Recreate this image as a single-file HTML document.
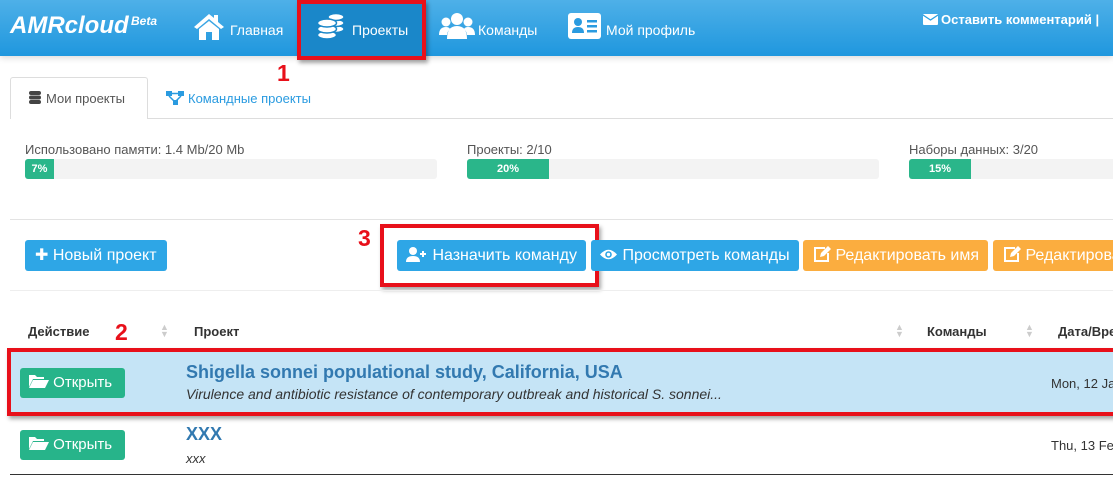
<!DOCTYPE html>
<html><head><meta charset="utf-8"><style>
*{box-sizing:border-box;margin:0;padding:0}
body{width:1113px;height:492px;overflow:hidden;background:#fff;font-family:"Liberation Sans",sans-serif;position:relative;color:#333}
.a{position:absolute;white-space:nowrap}
.hdr{left:0;top:0;width:1113px;height:56px;background:linear-gradient(#4eb0e8,#1f97de);box-shadow:0 2px 6px rgba(0,0,0,.15)}
.nav{color:#fff;font-size:14px}
.lbl{font-size:13px;color:#555}
.bar{height:20px;width:412px;background:#f3f3f3;border-radius:3px;overflow:hidden}
.fill{height:20px;background:#2ab68a;color:#fff;font-size:11px;text-align:center;line-height:20px;font-weight:bold}
.btn{height:31px;border-radius:3px;color:#fff;font-size:16px;line-height:31px;padding:0 10px}
.blue{background:#2ea6e6}.org{background:#fbad3f}.grn{background:#27b48a}
.red{border:4px solid #e8101a;box-shadow:2px 3px 4px rgba(0,0,0,.35)}
.num{color:#e8101a;font-size:23px;font-weight:bold}
.th{font-size:13px;font-weight:bold;color:#333}
.sort{color:#ccc;font-size:9px;line-height:7px}
</style></head><body>
<div class="a hdr"></div>
<div class="a" style="left:297px;top:0;width:128px;height:56px;background:#1a87c9"></div>
<div class="a" style="left:10px;top:12px;color:#fff;font-size:24px;font-weight:bold;font-style:italic">AMRcloud</div>
<div class="a" style="left:131px;top:14px;color:#fff;font-size:12px;font-weight:bold;font-style:italic">Beta</div>
<svg class="a" style="left:193px;top:12px" width="32" height="28" viewBox="0 0 32 28"><path d="M16 2 L1 15 L4 17 L16 7 L28 17 L31 15 L25 10 V3 H21 V6 Z" fill="#fff"/><path d="M6 17 L16 9 L26 17 V28 H19 V20 H13 V28 H6 Z" fill="#fff"/></svg>
<div class="a nav" style="left:230px;top:22px">Главная</div>
<svg class="a" style="left:316px;top:11px" width="30" height="30" viewBox="0 0 30 30"><g fill="#fff" stroke="#1a87c9" stroke-width="1.5"><ellipse cx="20" cy="18" rx="8" ry="3.5"/><ellipse cx="20" cy="12" rx="8" ry="3.5"/><ellipse cx="20" cy="6" rx="8" ry="3.5"/><ellipse cx="11" cy="24" rx="9.5" ry="4"/><ellipse cx="11" cy="18" rx="9.5" ry="4"/><ellipse cx="11" cy="12" rx="9.5" ry="4"/></g></svg>
<div class="a nav" style="left:352px;top:22px">Проекты</div>
<svg class="a" style="left:438px;top:13px" width="38" height="26" viewBox="0 0 38 26"><g fill="#fff"><circle cx="19" cy="6" r="6"/><circle cx="8" cy="9" r="4.5"/><circle cx="30" cy="9" r="4.5"/><path d="M9 26 Q9 13 19 13 Q29 13 29 26Z"/><path d="M1 22 Q1 14 8 14 Q11 14 12 16 Q9 19 9 22Z"/><path d="M37 22 Q37 14 30 14 Q27 14 26 16 Q29 19 29 22Z"/></g></svg>
<div class="a nav" style="left:478px;top:22px">Команды</div>
<svg class="a" style="left:568px;top:13px" width="33" height="26" viewBox="0 0 33 26"><rect x="0" y="0" width="33" height="26" rx="3" fill="#fff"/><circle cx="10" cy="9" r="4" fill="#2a9be0"/><path d="M4 20 Q4 14 10 14 Q16 14 16 20Z" fill="#2a9be0"/><rect x="19" y="7" width="10" height="2.5" fill="#2a9be0"/><rect x="19" y="12" width="10" height="2.5" fill="#2a9be0"/><rect x="19" y="17" width="10" height="2.5" fill="#2a9be0"/></svg>
<div class="a nav" style="left:606px;top:22px">Мой профиль</div>
<svg class="a" style="left:923px;top:14px" width="15" height="11" viewBox="0 0 15 11"><rect width="15" height="11" rx="1" fill="#fff"/><path d="M0 1 L7.5 6 L15 1" stroke="#2aa0e2" stroke-width="1.3" fill="none"/></svg>
<div class="a" style="left:941px;top:12px;color:#fff;font-size:13px;font-weight:bold">Оставить комментарий |</div>
<div class="a red" style="left:297px;top:0;width:129px;height:60px"></div>
<div class="a num" style="left:277px;top:60px">1</div>

<div class="a" style="left:10px;top:118px;width:1103px;height:1px;background:#ddd"></div>
<div class="a" style="left:10px;top:77px;width:138px;height:42px;border:1px solid #ddd;border-bottom:none;background:#fff;border-radius:3px 3px 0 0"></div>
<svg class="a" style="left:29px;top:91px" width="12" height="13" viewBox="0 0 12 13"><g fill="#444"><rect x="0" y="0" width="12" height="4" rx="2"/><rect x="0" y="4.5" width="12" height="4" rx="2"/><rect x="0" y="9" width="12" height="4" rx="2"/></g></svg>
<div class="a" style="left:46px;top:91px;font-size:13px;color:#555">Мои проекты</div>
<svg class="a" style="left:166px;top:91px" width="18" height="14" viewBox="0 0 18 14"><g fill="#2a9be0"><rect x="0" y="0" width="6" height="5"/><rect x="12" y="0" width="6" height="5"/><rect x="7" y="9" width="5" height="5"/><path d="M3 5 L9 11 M15 5 L9 11 M6 2.5 H12" stroke="#2a9be0" stroke-width="1.5"/></g></svg>
<div class="a" style="left:188px;top:91px;font-size:13px;color:#2a9be0">Командные проекты</div>

<div class="a lbl" style="left:25px;top:142px">Использовано памяти: 1.4 Mb/20 Mb</div>
<div class="a bar" style="left:25px;top:159px"><div class="fill" style="width:29px">7%</div></div>
<div class="a lbl" style="left:467px;top:142px">Проекты: 2/10</div>
<div class="a bar" style="left:467px;top:159px"><div class="fill" style="width:82px">20%</div></div>
<div class="a lbl" style="left:909px;top:142px">Наборы данных: 3/20</div>
<div class="a bar" style="left:909px;top:159px;width:220px"><div class="fill" style="width:62px">15%</div></div>

<div class="a" style="left:10px;top:219px;width:1103px;height:1px;background:#e3e3e3"></div>
<div class="a btn blue" style="left:25px;top:240px;width:142px">✚ Новый проект</div>
<div class="a num" style="left:358px;top:225px">3</div>
<div class="a btn blue" style="left:397px;top:240px;width:189px;padding-left:9px"><svg width="22" height="15" viewBox="0 0 22 15" style="vertical-align:-2px"><circle cx="7" cy="4" r="4" fill="#fff"/><path d="M0 15 Q0 9 7 9 Q14 9 14 15Z" fill="#fff"/><path d="M17 4 V10 M14 7 H20" stroke="#fff" stroke-width="2"/></svg> Назначить команду</div>
<div class="a red" style="left:380px;top:224px;width:219px;height:63px"></div>
<div class="a btn blue" style="left:591px;top:240px;width:208px;padding-left:8px"><svg width="19" height="13" viewBox="0 0 19 13" style="vertical-align:-1px"><path d="M1 6.5 Q9.5 -3 18 6.5 Q9.5 16 1 6.5Z" fill="#fff"/><circle cx="9.5" cy="6.5" r="3.3" fill="#2ea6e6"/><circle cx="9.5" cy="6.5" r="1.7" fill="#fff"/></svg> Просмотреть команды</div>
<div class="a btn org" style="left:803px;top:240px;width:185px"><svg width="18" height="16" viewBox="0 0 18 16" style="vertical-align:-2px"><path d="M12 2 H2 V15 H15 V7" stroke="#fff" stroke-width="2" fill="none"/><path d="M7 11 L8 7 L15 0 L18 3 L11 10 Z" fill="#fff"/></svg> Редактировать имя</div>
<div class="a btn org" style="left:993px;top:240px;width:140px"><svg width="18" height="16" viewBox="0 0 18 16" style="vertical-align:-2px"><path d="M12 2 H2 V15 H15 V7" stroke="#fff" stroke-width="2" fill="none"/><path d="M7 11 L8 7 L15 0 L18 3 L11 10 Z" fill="#fff"/></svg> Редактировать</div>

<div class="a" style="left:10px;top:290px;width:1103px;height:1px;background:#eee"></div>
<div class="a th" style="left:28px;top:324px">Действие</div>
<div class="a num" style="left:115px;top:319px">2</div>
<div class="a sort" style="left:160px;top:324px">▲<br>▼</div>
<div class="a th" style="left:194px;top:324px">Проект</div>
<div class="a sort" style="left:895px;top:324px">▲<br>▼</div>
<div class="a th" style="left:927px;top:324px">Команды</div>
<div class="a sort" style="left:1025px;top:324px">▲<br>▼</div>
<div class="a th" style="left:1058px;top:324px">Дата/Время</div>

<div class="a" style="left:10px;top:352px;width:1103px;height:61px;background:#c5e4f6"></div>
<div class="a btn grn" style="left:20px;top:368px;width:105px;height:30px;line-height:30px;font-size:15px;padding-left:9px"><svg width="20" height="14" viewBox="0 0 20 14" style="vertical-align:-1px"><path d="M0 1 H6 L8 3 H15 V5 H4 L0 13Z" fill="#fff"/><path d="M4 6 H20 L16 14 H0Z" fill="#fff"/></svg> Открыть</div>
<div class="a" style="left:186px;top:362px;font-size:18px;font-weight:bold;color:#3279b0">Shigella sonnei populational study, California, USA</div>
<div class="a" style="left:186px;top:386px;font-size:14px;font-style:italic;color:#333">Virulence and antibiotic resistance of contemporary outbreak and historical S. sonnei...</div>
<div class="a" style="left:1051px;top:376px;font-size:13px;color:#333">Mon, 12 Jan</div>
<div class="a red" style="left:7px;top:348px;width:1115px;height:68px"></div>

<div class="a btn grn" style="left:20px;top:430px;width:105px;height:30px;line-height:30px;font-size:15px;padding-left:9px"><svg width="20" height="14" viewBox="0 0 20 14" style="vertical-align:-1px"><path d="M0 1 H6 L8 3 H15 V5 H4 L0 13Z" fill="#fff"/><path d="M4 6 H20 L16 14 H0Z" fill="#fff"/></svg> Открыть</div>
<div class="a" style="left:186px;top:424px;font-size:18px;font-weight:bold;color:#3279b0">XXX</div>
<div class="a" style="left:186px;top:451px;font-size:13px;font-style:italic;color:#333">xxx</div>
<div class="a" style="left:1051px;top:438px;font-size:13px;color:#333">Thu, 13 Feb</div>
<div class="a" style="left:10px;top:474px;width:1103px;height:1px;background:#333"></div>
</body></html>
